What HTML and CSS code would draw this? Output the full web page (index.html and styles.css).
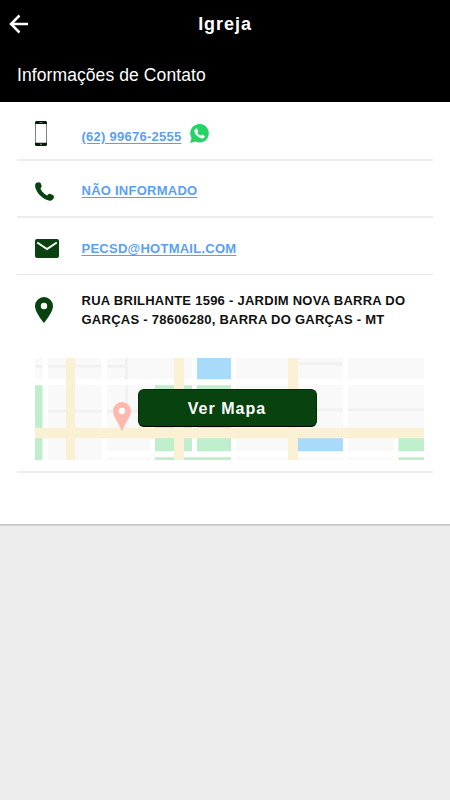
FILE: index.html
```html
<!DOCTYPE html>
<html lang="pt-BR">
<head>
<meta charset="utf-8">
<title>Igreja</title>
<link rel="stylesheet" href="styles.css">
</head>
<body>
<header class="header">
  <div class="bar">
    <svg class="back" viewBox="0 0 20 20"><path d="M10.500 1.500 2 10l8.500 8.500M2 10h17" fill="none" stroke="#fff" stroke-width="2.500"/></svg>
    <h1 class="title">Igreja</h1>
  </div>
  <h2 class="subtitle">Informações de Contato</h2>
</header>
<main class="card">
  <section class="row row-mobile">
    <div class="icon"><svg class="mobile" width="12" height="25" viewBox="0 0 12 25"><rect x=".5" y=".5" width="11" height="24" rx="1.500" fill="#fff" stroke="#7b817b"/><path d="M0 3V1.500Q0 0 1.500 0h9Q12 0 12 1.500V3zM0 21.800h12v1.700q0 1.500-1.500 1.500h-9Q0 25 0 23.500z" fill="#071b09"/><path d="M4.500 1.600h3" stroke="#8a948a" stroke-width=".8"/><circle cx="6" cy="23.300" r=".9" fill="#8a948a"/></svg></div>
    <a class="link phone">(62) 99676-2555</a>
    <svg class="whatsapp" viewBox="0 0 19 19"><path d="M.2 18.900 1.500 14A9.300 9.300 0 1 1 5.200 17.500z" fill="#25d366"/><path d="M6.200 4.400c-.5 0-1.800.9-1.800 2.500 0 3.500 4.800 7.500 7.900 7.500 1.300 0 2.500-1 2.600-2.500L12 10.400c-.5-.1-1 1-1.400 1.200-1-.1-3-1.900-3.200-2.900.1-.5 1-1.100.9-1.500L7.200 4.800c-.1-.3-.5-.4-1-.4z" fill="#fff"/></svg>
  </section>
  <section class="row row-phone">
    <div class="icon"><svg class="handset" width="19" height="19" viewBox="0 0 19 19"><path d="M1.500.8C3-.1 4.800-.1 5.600 1l1 2.700c.3 1-.1 1.700-1.100 2.300C5.600 8.300 9.600 12.600 12.300 13.400c.9-1.300 1.900-1.900 3-1.500l2.500 1.100c1.500.8 1.500 2.300.5 3.800-1 1.600-2.700 2.200-4.600 1.700C7.700 17.200 1.600 11.300.2 5 0 3.100.2 1.600 1.500.8z" fill="#08420f"/></svg></div>
    <a class="link">NÃO INFORMADO</a>
  </section>
  <section class="row row-mail">
    <div class="icon"><svg class="envelope" width="24" height="19" viewBox="0 0 24 19"><rect width="24" height="19" rx="2" fill="#08420f"/><path d="m2.200 3.500 9.800 6.600 9.800-6.600" fill="none" stroke="#fff" stroke-width="2"/></svg></div>
    <a class="link">PECSD@HOTMAIL.COM</a>
  </section>
  <section class="place">
    <div class="address">
      <div class="icon"><svg class="pin" width="18" height="26" viewBox="0 0 18 26"><path fill-rule="evenodd" d="M9 0a9 9 0 0 1 9 9c0 6.500-9 17-9 17S0 15.500 0 9a9 9 0 0 1 9-9zm0 5.800a3.200 3.200 0 1 0 0 6.400 3.200 3.200 0 0 0 0-6.400z" fill="#08420f"/></svg></div>
      <p class="text">RUA BRILHANTE 1596 - JARDIM NOVA BARRA DO<br>GARÇAS - 78606280, BARRA DO GARÇAS - MT</p>
    </div>
    <div class="map">
      <svg class="streets" viewBox="0 0 389 102">
        <path fill="#f9f9f9" d="M0 0h7.500v21.300H0zM13 0h53.700v21.300H13zM72 0h85v21.300H72zM201 0h107v21.300H201zM313 0h76v21.300h-76zM13 27.300h53.700V102H13zM72 27.300h48v66H72zM201 27.300h107v66H201zM313 27.300h76V70h-76zM313 80h45.500v13.300H313zM72 99.300h43.500V102H72zM201 99.300h107V102H201zM313 99.300h45.500V102H313z"/>
        <path fill="#fff" d="M115.500 80h4.500v13.300h-4.500z"/>
        <path fill="#f1f1f1" d="M0 6.700h7.500v3H0zM13 6.700h53.700v3H13zM72 6.700h18V0h3v21.300h-3V9.700H72zM13 51.800h53.700v3H13zM72 51.800h18V27.300h3v24.500h27v3H72zM263 4.300h45v3h-45zM263 50.300h45v3h-45zM313 50.300h76v3h-76z"/>
        <path fill="#beeecb" d="M0 27.300h7.500V102H0zM120 27.300h37v66h-37zM162 27.300h34v66h-34zM120 99.300h76v2.700h-76zM363.500 80H389v13.300h-25.500zM363.500 99.300H389v2.700h-25.500z"/>
        <path fill="#a8daf9" d="M162 0h34v21.300h-34zM263 80h45v13.300h-45z"/>
        <path fill="#faf0d3" d="M31 0h9.300v102H31zM139 0h10v102h-10zM253 0h10v102h-10zM0 69.700h389v10.600H0z"/>
        <path fill="#fff" d="M83 49h8v8h-8z"/>
        <path fill="#ffb8ae" fill-rule="evenodd" d="M87 44a9 9 0 0 1 9 9c0 5-4 9-9 20-5-11-9-15-9-20a9 9 0 0 1 9-9zm0 5.800a3.200 3.200 0 1 0 0 6.400 3.200 3.200 0 0 0 0-6.400z"/>
      </svg>
      <button class="button">Ver Mapa</button>
    </div>
  </section>
</main>
</body>
</html>
```
FILE: styles.css
```css
* { box-sizing: border-box; }
body {
  margin: 0;
  min-height: 800px;
  background: #ededed;
  font-family: "Liberation Sans", Arial, sans-serif;
  color: #111;
}
svg { display: block; flex: none; }
.header { height: 102px; background: #000; color: #fff; }
.bar {
  display: grid;
  grid-template-columns: 20px 1fr 20px;
  align-items: center;
  height: 48px;
  padding: 0 9px;
}
.back { width: 20px; height: 20px; }
.title {
  margin: 0;
  font-size: 18px;
  line-height: 20px;
  letter-spacing: .950px;
  text-align: center;
}
.subtitle {
  margin: 0;
  padding: 16px 0 0 17px;
  font-size: 17.500px;
  line-height: 22px;
  font-weight: 400;
  letter-spacing: .090px;
}
.card {
  height: 423px;
  padding: 0 17px;
  background: #fff;
  border-bottom: 1px solid #c8c8c8;
  box-shadow: 0 1px 1px #d4d4d4;
}
.row, .place { border-bottom: 2px solid #ededed; }
.row { display: flex; align-items: center; padding-left: 18px; }
.row-mobile { height: 59px; padding-top: 8px; }
.row-phone { height: 57px; padding-top: 4px; }
.row-mail { height: 57px; padding-top: 6px; }
.row-mail { border-bottom-width: 1px; border-bottom-color: #e6e6e6; }
.icon { width: 46.500px; flex: none; }
.mobile { margin-top: -2px; }
.handset { margin-top: 2px; }
.envelope { margin-top: -1px; }
.link {
  color: #5b9ff5;
  font-size: 13px;
  line-height: 18px;
  font-weight: 700;
  text-decoration: underline;
  text-underline-offset: 2px;
  letter-spacing: .25px;
}
.phone { padding-top: 4px; }
.whatsapp { width: 19px; height: 19px; margin: -3px 0 0 9px; }
.place { height: 198px; padding: 16px 8px 0 18px; }
.address { display: flex; height: 67px; }
.pin { margin-top: 6px; }
.text {
  margin: 0;
  font-size: 13px;
  line-height: 19px;
  font-weight: 700;
  letter-spacing: .260px;
  white-space: nowrap;
}
.map { display: grid; place-items: center; width: 389px; height: 102px; }
.streets, .button { grid-area: 1 / 1; }
.streets { width: 389px; height: 102px; }
.button {
  width: 179px;
  height: 38px;
  margin: 0 5px 2px 0;
  padding: 1px 0 0;
  border: 1px solid #052d0a;
  border-bottom-color: #000;
  border-radius: 6px;
  background: #08420f;
  color: #fff;
  font: 700 16px "Liberation Sans", Arial, sans-serif;
  letter-spacing: 1.050px;
  z-index: 1;
}
```
